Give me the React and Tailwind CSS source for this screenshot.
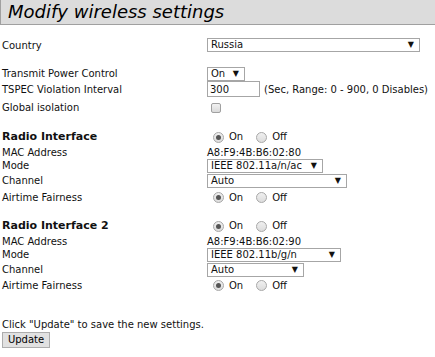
import React from 'react';

const font = { fontFamily: '"DejaVu Sans", Verdana, sans-serif' };

function Select({ value, width }) {
  return (
    <div className={`${width} h-[14px] border border-[#a6a6a6] bg-white flex items-center justify-between pl-[3px] pr-[5px] leading-none`}>
      <span>{value}</span>
      <span className="text-[8px]">▼</span>
    </div>
  );
}

function Radio({ checked }) {
  return (
    <span className="w-[11px] h-[11px] rounded-full border border-[#a8a8a8] bg-gradient-to-b from-[#f0f0f0] to-[#dcdcdc] flex items-center justify-center">
      {checked && <span className="w-[5px] h-[5px] rounded-full bg-[#555]" />}
    </span>
  );
}

function OnOff() {
  return (
    <div className="flex items-center pl-[6px] leading-none">
      <Radio checked />
      <span className="ml-[5px]">On</span>
      <span className="ml-[13px]"><Radio /></span>
      <span className="ml-[5px]">Off</span>
    </div>
  );
}

function Row({ label, children, className = '', bold }) {
  return (
    <div className={`grid grid-cols-[205px_1fr] items-center ${className}`}>
      <span className={bold ? 'font-bold text-[11px]' : ''}>{label}</span>
      <div className="flex items-center">{children}</div>
    </div>
  );
}

export default function App() {
  return (
    <div className="w-[435px] h-[357px] bg-white text-[10px] text-[#111] overflow-hidden" style={font}>
      {/* Header */}
      <div className="h-[25px] bg-[#dcdcdc] border-l border-b border-[#a0a0a0] flex items-center pl-[7px]">
        <span className="italic text-[18px] text-black leading-none">Modify wireless settings</span>
      </div>

      <div className="pl-[2px]">
        <Row label="Country" className="h-[16px] mt-[12px]">
          <Select value="Russia" width="w-[213px]" />
        </Row>

        <Row label="Transmit Power Control" className="h-[14px] mt-[13px]">
          <Select value="On" width="w-[38px]" />
        </Row>

        <Row label="TSPEC Violation Interval" className="h-[16px] mt-[1px]">
          <input
            readOnly
            value="300"
            className="w-[53px] h-[16px] border border-[#a6a6a6] px-[2px] text-[10px] outline-none"
            style={font}
          />
          <span className="ml-[4px]">(Sec, Range: 0 - 900, 0 Disables)</span>
        </Row>

        <Row label="Global isolation" className="h-[14px] mt-[3px]">
          <span className="ml-[4px] w-[10px] h-[10px] rounded-[2px] border border-[#a0a0a0] bg-gradient-to-b from-[#f2f2f2] to-[#dadada]" />
        </Row>

        <Row label="Radio Interface" bold className="h-[16px] mt-[15px]">
          <OnOff />
        </Row>
        <Row label="MAC Address" className="h-[13px]">
          <span>A8:F9:4B:B6:02:80</span>
        </Row>
        <Row label="Mode" className="h-[14px]">
          <Select value="IEEE 802.11a/n/ac" width="w-[116px]" />
        </Row>
        <Row label="Channel" className="h-[14px] mt-[1px]">
          <Select value="Auto" width="w-[140px]" />
        </Row>
        <Row label="Airtime Fairness" className="h-[14px] mt-[3px]">
          <OnOff />
        </Row>

        <Row label="Radio Interface 2" bold className="h-[16px] mt-[14px]">
          <OnOff />
        </Row>
        <Row label="MAC Address" className="h-[13px]">
          <span>A8:F9:4B:B6:02:90</span>
        </Row>
        <Row label="Mode" className="h-[14px]">
          <Select value="IEEE 802.11b/g/n" width="w-[134px]" />
        </Row>
        <Row label="Channel" className="h-[14px] mt-[1px]">
          <Select value="Auto" width="w-[97px]" />
        </Row>
        <Row label="Airtime Fairness" className="h-[14px] mt-[2px]">
          <OnOff />
        </Row>

        <p className="mt-[26px] h-[14px] leading-[14px]">Click "Update" to save the new settings.</p>
        <button className="mt-[-1px] w-[48px] h-[16px] bg-[#e1e1e1] border border-[#adadad] text-[10px] leading-none text-black" style={font}>
          Update
        </button>
      </div>
    </div>
  );
}
